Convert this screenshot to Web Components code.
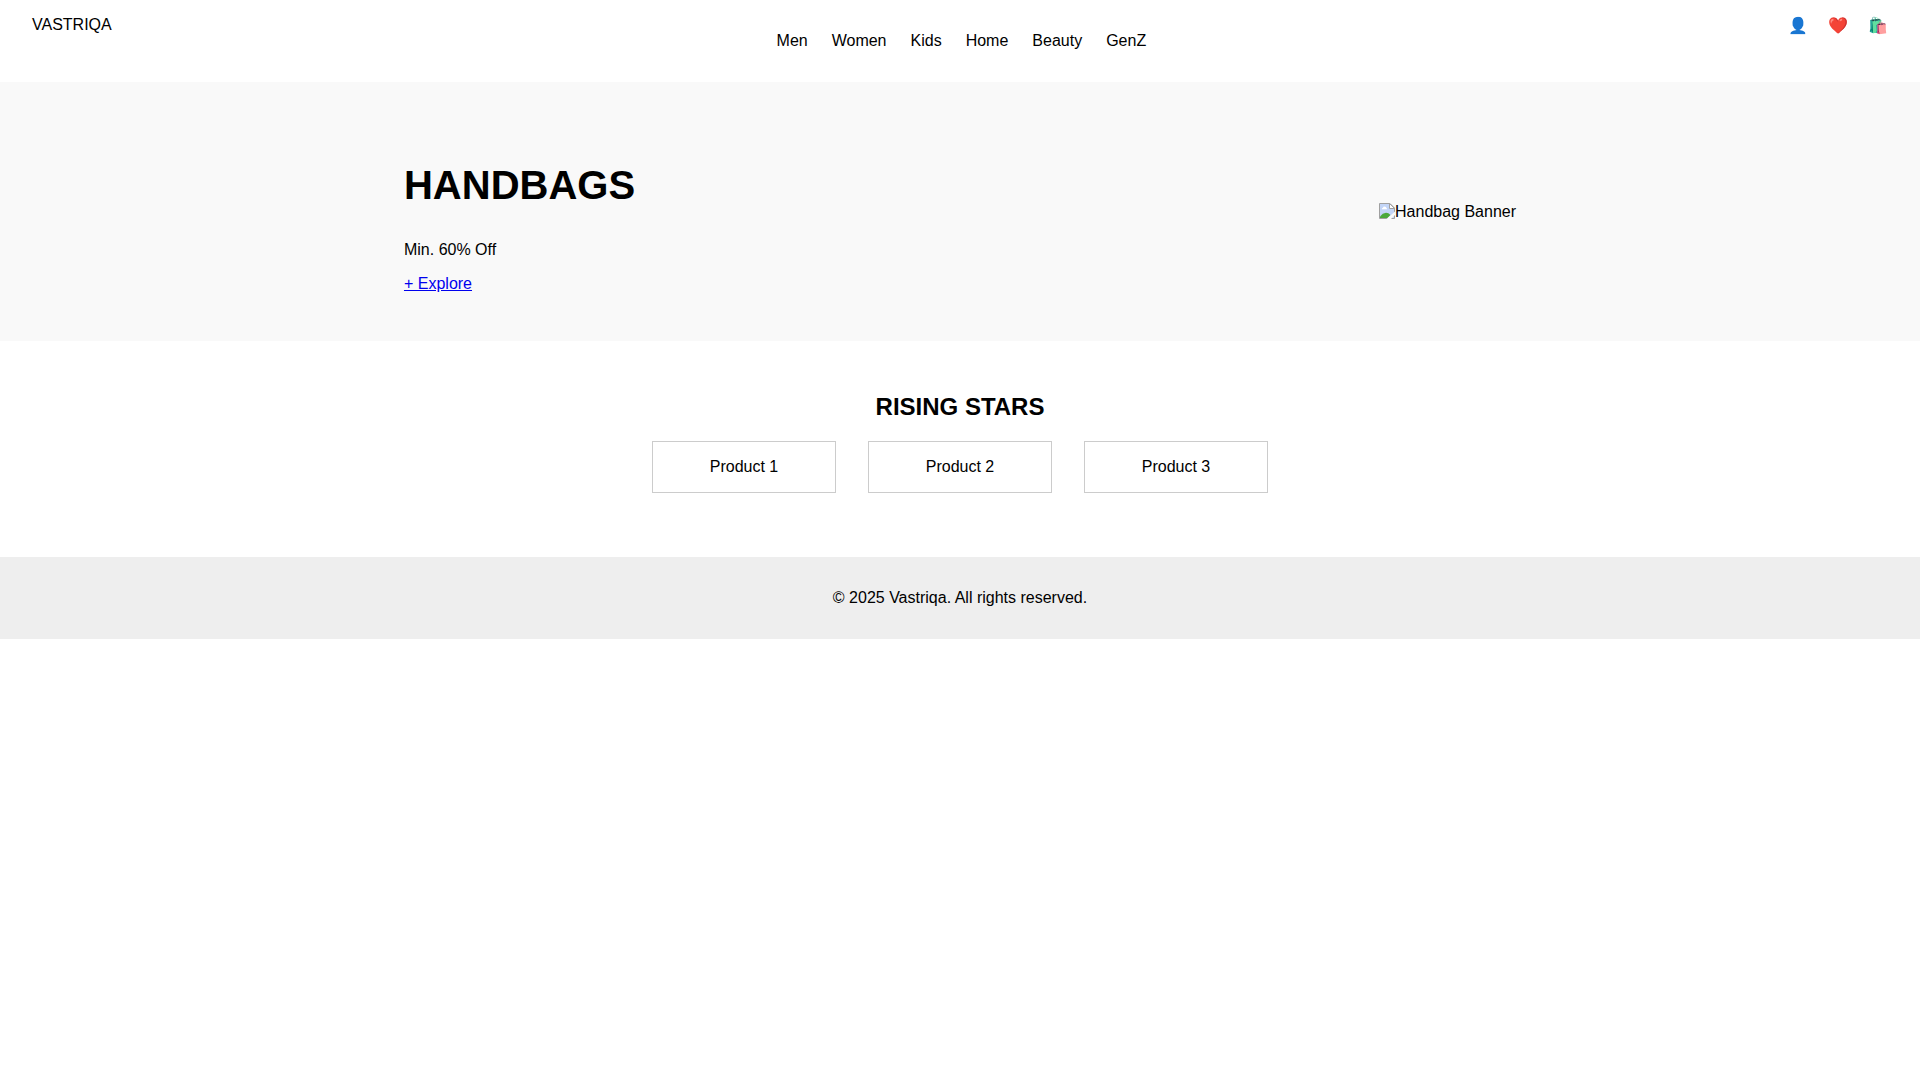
<!DOCTYPE html>
<html lang="en">
<head>
<meta charset="UTF-8">
<meta name="viewport" content="width=device-width, initial-scale=1">
<title>Vastriqa</title>
<style>
  body { margin: 0; background: #fff; color: #000; font: 16px/18px "Liberation Sans", Arial, sans-serif; }
</style>
</head>
<body>
<store-header brand="VASTRIQA">
  <nav-link href="#men">Men</nav-link>
  <nav-link href="#women">Women</nav-link>
  <nav-link href="#kids">Kids</nav-link>
  <nav-link href="#home">Home</nav-link>
  <nav-link href="#beauty">Beauty</nav-link>
  <nav-link href="#genz">GenZ</nav-link>
  <icon-button slot="actions" label="Account">👤</icon-button>
  <icon-button slot="actions" label="Wishlist">❤️</icon-button>
  <icon-button slot="actions" label="Bag">🛍️</icon-button>
</store-header>
<main>
  <hero-banner href="#handbags">
    <span slot="title">HANDBAGS</span>
    <span slot="offer">Min. 60% Off</span>
    <span slot="action">+ Explore</span>
    <image-placeholder slot="media">Handbag Banner</image-placeholder>
  </hero-banner>
  <product-section>
    <span slot="title">RISING STARS</span>
    <product-card>Product 1</product-card>
    <product-card>Product 2</product-card>
    <product-card>Product 3</product-card>
  </product-section>
</main>
<store-footer>© 2025 Vastriqa. All rights reserved.</store-footer>

<script>
  class BaseElement extends HTMLElement {
    constructor() {
      super();
      const template = document.createElement("template");
      template.innerHTML = this.constructor.markup;
      this.attachShadow({ mode: "open" }).append(template.content.cloneNode(true));
    }
  }

  customElements.define("store-header", class extends BaseElement {
    static markup = `
      <style>
        :host { display: block; }
        header { display: flex; justify-content: space-between; align-items: flex-start; padding: 16px 32px; }
        nav { display: flex; gap: 24px; padding: 16px 0 16px 40px; }
        .actions { display: flex; gap: 20px; padding-left: 17px; }
      </style>
      <header>
        <div class="brand"></div>
        <nav aria-label="Departments"><slot></slot></nav>
        <div class="actions"><slot name="actions"></slot></div>
      </header>`;
    connectedCallback() {
      this.shadowRoot.querySelector(".brand").textContent = this.getAttribute("brand");
    }
  });

  customElements.define("nav-link", class extends BaseElement {
    static markup = `
      <style>
        :host { display: block; }
        a { color: inherit; text-decoration: none; }
      </style>
      <a><slot></slot></a>`;
    connectedCallback() {
      this.shadowRoot.querySelector("a").href = this.getAttribute("href");
    }
  });

  customElements.define("icon-button", class extends BaseElement {
    static markup = `
      <style>
        :host { display: block; }
        button { display: block; margin: 0; padding: 0; border: 0; background: none; color: inherit; font: inherit; line-height: 20px; cursor: pointer; }
      </style>
      <button type="button"><slot></slot></button>`;
    connectedCallback() {
      this.shadowRoot.querySelector("button").setAttribute("aria-label", this.getAttribute("label"));
    }
  });

  customElements.define("hero-banner", class extends BaseElement {
    static markup = `
      <style>
        :host { display: block; background: #f9f9f9; }
        section { display: flex; justify-content: space-around; align-items: center; padding: 48px 32px; }
        h1 { margin: 33px 0; font-size: 40px; line-height: 45px; }
        p { margin: 0 0 16px; }
        a { display: block; width: fit-content; color: #0000ee; text-decoration: underline; }
      </style>
      <section>
        <div>
          <h1><slot name="title"></slot></h1>
          <p><slot name="offer"></slot></p>
          <a><slot name="action"></slot></a>
        </div>
        <slot name="media"></slot>
      </section>`;
    connectedCallback() {
      this.shadowRoot.querySelector("a").href = this.getAttribute("href");
    }
  });

  customElements.define("image-placeholder", class extends BaseElement {
    static markup = `
      <style>
        :host { display: flex; align-items: flex-start; }
        svg { display: block; width: 16px; height: 16px; }
      </style>
      <svg viewBox="0 0 16 16" aria-hidden="true">
        <path d="M.5 .5H11L15.5 5V15.5H.5Z" fill="#c3d5f7" stroke="#a0a0a0"/>
        <path d="M3 6.2Q2.7 4.9 4 4.7Q4.5 3 6 3.7Q7.5 3.7 7.3 4.9Q8.3 5.2 8 6.2Z" fill="#fff"/>
        <path d="M1 15V13.5Q3.5 10 7 9.7Q9.5 9.8 11.5 12L8.5 15Z" fill="#4ba83b"/>
        <path d="M16 8.5L7.5 16H12L16 12Z" fill="#f9f9f9"/>
        <path d="M10.5 .5V5.5H15.5Z" fill="#fff" stroke="#a0a0a0"/>
      </svg>
      <span><slot></slot></span>`;
  });

  customElements.define("product-section", class extends BaseElement {
    static markup = `
      <style>
        :host { display: block; }
        section { padding: 52px 32px 64px; text-align: center; }
        h2 { margin: 0 0 20px; font-size: 24px; line-height: 28px; }
        .products { display: flex; flex-wrap: wrap; justify-content: center; gap: 32px; }
      </style>
      <section>
        <h2><slot name="title"></slot></h2>
        <div class="products"><slot></slot></div>
      </section>`;
  });

  customElements.define("product-card", class extends BaseElement {
    static markup = `
      <style>
        :host { display: block; width: 150px; padding: 16px; border: 1px solid #ccc; }
      </style>
      <slot></slot>`;
  });

  customElements.define("store-footer", class extends BaseElement {
    static markup = `
      <style>
        :host { display: block; background: #eee; }
        footer { padding: 32px; text-align: center; }
      </style>
      <footer><slot></slot></footer>`;
  });
</script>
</body>
</html>
